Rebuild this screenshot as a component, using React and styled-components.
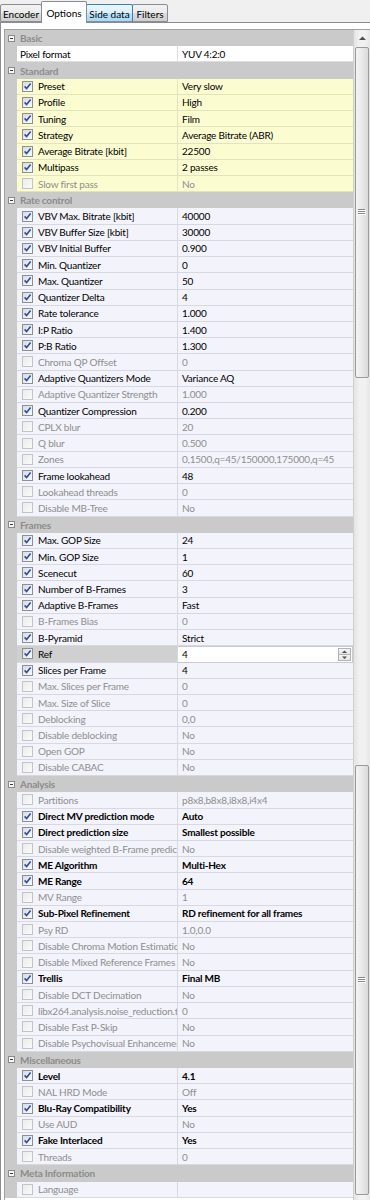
import React from 'react';
import styled, { createGlobalStyle } from 'styled-components';

const ROW_H = 16.22;
const CAT = '#cacaca';

const tones = {
  white: { bg: '#ffffff', line: '#dedede' },
  yellow: { bg: '#fcfcd1', line: '#e3e3c0' },
  lilac: { bg: '#f3f3fb', line: '#d8d8e2' },
};

const tabs = [
  { label: 'Encoder', w: 42 },
  { label: 'Options', w: 46, active: true },
  { label: 'Side data', w: 47, hover: true },
  { label: 'Filters', w: 36 },
];

// state: on = checked, bold = checked + changed, off = unchecked/disabled, plain = no checkbox
const sections = [
  { title: 'Basic', tone: 'white', rows: [['Pixel format', 'YUV 4:2:0', 'plain']] },
  {
    title: 'Standard', tone: 'yellow', rows: [
      ['Preset', 'Very slow', 'on'],
      ['Profile', 'High', 'on'],
      ['Tuning', 'Film', 'on'],
      ['Strategy', 'Average Bitrate (ABR)', 'on'],
      ['Average Bitrate [kbit]', '22500', 'on'],
      ['Multipass', '2 passes', 'on'],
      ['Slow first pass', 'No', 'off'],
    ],
  },
  {
    title: 'Rate control', tone: 'lilac', rows: [
      ['VBV Max. Bitrate [kbit]', '40000', 'on'],
      ['VBV Buffer Size [kbit]', '30000', 'on'],
      ['VBV Initial Buffer', '0.900', 'on'],
      ['Min. Quantizer', '0', 'on'],
      ['Max. Quantizer', '50', 'on'],
      ['Quantizer Delta', '4', 'on'],
      ['Rate tolerance', '1.000', 'on'],
      ['I:P Ratio', '1.400', 'on'],
      ['P:B Ratio', '1.300', 'on'],
      ['Chroma QP Offset', '0', 'off'],
      ['Adaptive Quantizers Mode', 'Variance AQ', 'on'],
      ['Adaptive Quantizer Strength', '1.000', 'off'],
      ['Quantizer Compression', '0.200', 'on'],
      ['CPLX blur', '20', 'off'],
      ['Q blur', '0.500', 'off'],
      ['Zones', '0,1500,q=45/150000,175000,q=45', 'off'],
      ['Frame lookahead', '48', 'on'],
      ['Lookahead threads', '0', 'off'],
      ['Disable MB-Tree', 'No', 'off'],
    ],
  },
  {
    title: 'Frames', tone: 'lilac', rows: [
      ['Max. GOP Size', '24', 'on'],
      ['Min. GOP Size', '1', 'on'],
      ['Scenecut', '60', 'on'],
      ['Number of B-Frames', '3', 'on'],
      ['Adaptive B-Frames', 'Fast', 'on'],
      ['B-Frames Bias', '0', 'off'],
      ['B-Pyramid', 'Strict', 'on'],
      ['Ref', '4', 'edit'],
      ['Slices per Frame', '4', 'on'],
      ['Max. Slices per Frame', '0', 'off'],
      ['Max. Size of Slice', '0', 'off'],
      ['Deblocking', '0,0', 'off'],
      ['Disable deblocking', 'No', 'off'],
      ['Open GOP', 'No', 'off'],
      ['Disable CABAC', 'No', 'off'],
    ],
  },
  {
    title: 'Analysis', tone: 'lilac', rows: [
      ['Partitions', 'p8x8,b8x8,i8x8,i4x4', 'off'],
      ['Direct MV prediction mode', 'Auto', 'bold'],
      ['Direct prediction size', 'Smallest possible', 'bold'],
      ['Disable weighted B-Frame prediction', 'No', 'off'],
      ['ME Algorithm', 'Multi-Hex', 'bold'],
      ['ME Range', '64', 'bold'],
      ['MV Range', '1', 'off'],
      ['Sub-Pixel Refinement', 'RD refinement for all frames', 'bold'],
      ['Psy RD', '1.0,0.0', 'off'],
      ['Disable Chroma Motion Estimation', 'No', 'off'],
      ['Disable Mixed Reference Frames', 'No', 'off'],
      ['Trellis', 'Final MB', 'bold'],
      ['Disable DCT Decimation', 'No', 'off'],
      ['libx264.analysis.noise_reduction.title', '0', 'off'],
      ['Disable Fast P-Skip', 'No', 'off'],
      ['Disable Psychovisual Enhancements', 'No', 'off'],
    ],
  },
  {
    title: 'Miscellaneous', tone: 'lilac', rows: [
      ['Level', '4.1', 'bold'],
      ['NAL HRD Mode', 'Off', 'off'],
      ['Blu-Ray Compatibility', 'Yes', 'bold'],
      ['Use AUD', 'No', 'off'],
      ['Fake Interlaced', 'Yes', 'bold'],
      ['Threads', '0', 'off'],
    ],
  },
  { title: 'Meta Information', tone: 'lilac', rows: [['Language', '', 'off']] },
];

const GlobalStyle = createGlobalStyle`
  html, body { margin: 0; padding: 0; background: #f0f0f0; }
  body { font-family: Lato, "Liberation Sans", sans-serif; }
`;

const Window = styled.div`
  width: 370px;
  height: 1200px;
  overflow: hidden;
  background: #f0f0f0;
  font-size: 10px;
  letter-spacing: -0.2px;
  color: #000;
`;

const TabStrip = styled.div`
  display: flex;
  align-items: flex-end;
  height: 22px;
  position: relative;
  z-index: 2;
  letter-spacing: 0;
`;

const Tab = styled.div`
  box-sizing: border-box;
  width: ${p => p.$w}px;
  height: ${p => (p.$active ? 22 : 18)}px;
  margin-bottom: ${p => (p.$active ? -1 : 0)}px;
  margin-left: -1px;
  &:first-child { margin-left: 0; }
  display: flex;
  align-items: center;
  justify-content: center;
  padding-top: ${p => (p.$active ? 0 : 2)}px;
  border: 1px solid ${p => (p.$hover ? '#3c7fb1' : '#898c95')};
  border-bottom: ${p => (p.$active ? 'none' : '1px solid #898c95')};
  border-radius: 2px 2px 0 0;
  position: relative;
  z-index: ${p => (p.$active ? 2 : p.$hover ? 1 : 0)};
  background: ${p =>
    p.$active
      ? '#ffffff'
      : p.$hover
        ? 'linear-gradient(#eaf6fd, #d9f0fc 50%, #bee6fd 50%, #a7d9f5)'
        : 'linear-gradient(#f2f2f2, #ebebeb 50%, #dddddd 50%, #cfcfcf)'};
  white-space: nowrap;
`;

const Page = styled.div`
  box-sizing: border-box;
  height: 1178px;
  border-top: 1px solid #898c95;
  border-left: 1px solid #898c95;
  background: #ffffff;
  padding: 6px 0 0 3px;
`;

const Grid = styled.div`
  display: flex;
  border-top: 1px solid #a0a0a0;
  border-left: 1px solid #a0a0a0;
  height: 1180px;
`;

const Rows = styled.div`
  width: 348px;
  flex: none;
  display: flex;
  flex-direction: column;
`;

const CatRow = styled.div`
  display: flex;
  align-items: center;
  flex: none;
  height: ${ROW_H}px;
  background: ${CAT};
  color: #8c8c8c;
  font-weight: 700;
  white-space: nowrap;
`;

const Expander = styled.span`
  box-sizing: border-box;
  width: 7px;
  height: 7px;
  margin: 0 5px 0 3px;
  border: 1px solid #8a8a8a;
  background: #f7f7f7;
  display: flex;
  align-items: center;
  justify-content: center;
  &::after {
    content: '';
    width: 3px;
    height: 1px;
    background: #3a3a3a;
  }
`;

const Row = styled.div`
  display: flex;
  flex: none;
  height: ${ROW_H}px;
`;

const Margin = styled.div`
  width: 12px;
  flex: none;
  background: ${CAT};
`;

const NameCell = styled.div`
  box-sizing: border-box;
  width: 161px;
  flex: none;
  display: flex;
  align-items: center;
  gap: 5px;
  padding-left: ${p => (p.$plain ? 3 : 5)}px;
  overflow: hidden;
  white-space: nowrap;
  background: ${p => (p.$selected ? '#d0d0d0' : p.$bg)};
  border-right: 1px solid ${p => p.$line};
  border-bottom: 1px solid ${p => p.$line};
  color: ${p => (p.$dim ? '#8e8e8e' : '#000')};
  font-weight: ${p => (p.$bold ? 700 : 400)};
`;

const Label = styled.span`
  flex: 1;
  min-width: 0;
  overflow: hidden;
`;

const ValueCell = styled.div`
  box-sizing: border-box;
  flex: 1;
  min-width: 0;
  display: flex;
  align-items: center;
  padding-left: 4px;
  overflow: hidden;
  white-space: nowrap;
  background: ${p => p.$bg};
  border-bottom: 1px solid ${p => p.$line};
  color: ${p => (p.$dim ? '#8e8e8e' : '#000')};
  font-weight: ${p => (p.$bold ? 700 : 400)};
`;

const Editor = styled.div`
  box-sizing: border-box;
  flex: 1;
  min-width: 0;
  display: flex;
  align-items: center;
  padding-left: 4px;
  background: #ffffff;
  border: 1px solid #c9c9d3;
  border-left: none;
`;

const Spin = styled.div`
  margin-left: auto;
  margin-right: 1px;
  width: 13px;
  height: 13px;
  display: flex;
  flex-direction: column;
`;

const SpinButton = styled.div`
  box-sizing: border-box;
  flex: 1;
  display: flex;
  align-items: center;
  justify-content: center;
  border: 1px solid #b4b4b4;
  border-top: ${p => (p.$down ? 'none' : '1px solid #b4b4b4')};
  background: linear-gradient(#f6f6f6, #e4e4e4);
`;

const Box = styled.span`
  box-sizing: border-box;
  width: 11px;
  height: 11px;
  flex: none;
  display: flex;
  align-items: center;
  justify-content: center;
  border: 1px solid ${p => (p.$on ? '#8e8f8f' : '#c4c4c4')};
  background: ${p =>
    p.$on ? 'linear-gradient(135deg, #d6dbe3, #fbfbfb)' : 'linear-gradient(135deg, #ececec, #fafafa)'};
`;

const ScrollBar = styled.div`
  width: 16px;
  flex: none;
  display: flex;
  flex-direction: column;
  border-left: 1px solid #cfcfcf;
  background: linear-gradient(90deg, #e4e4e4, #f1f1f1 35%, #f1f1f1 70%, #e6e6e6);
`;

const ArrowButton = styled.div`
  height: 16px;
  flex: none;
  display: flex;
  align-items: center;
  justify-content: center;
`;

const Thumb = styled.div`
  box-sizing: border-box;
  height: ${p => p.$h}px;
  flex: none;
  margin: ${p => p.$top || 0}px 1px 0 1px;
  border: 1px solid #999999;
  border-radius: 2px;
  background: linear-gradient(90deg, #f4f4f4, #e9e9e9 50%, #dadada);
  display: flex;
  align-items: center;
  justify-content: center;
`;

const Track = styled.div`
  height: ${p => p.$h}px;
  flex: none;
`;

function CheckBox({ on }) {
  return (
    <Box $on={on}>
      {on && (
        <svg width="9" height="9" viewBox="0 0 9 9">
          <path d="M1.6 4.4 L3.6 6.6 L7.6 1.6" fill="none" stroke="#2f4f9e" strokeWidth="1.6" />
        </svg>
      )}
    </Box>
  );
}

function Grip() {
  return (
    <svg width="8" height="7" viewBox="0 0 8 7">
      {[0, 2, 4].map(y => (
        <g key={y}>
          <rect x="0" y={y} width="7" height="1" fill="#8a8a8a" />
          <rect x="1" y={y + 1} width="7" height="1" fill="#ffffff" />
        </g>
      ))}
    </svg>
  );
}

function Arrow({ down, size = 7 }) {
  return (
    <svg width={size} height={size / 2 + 1} viewBox="0 0 7 4.5">
      <path d={down ? 'M0 0.5 L7 0.5 L3.5 4 Z' : 'M0 4 L7 4 L3.5 0.5 Z'} fill="#4d4d4d" />
    </svg>
  );
}

function PropRow({ row, tone }) {
  const [label, value, state] = row;
  const { bg, line } = tones[tone];
  const dim = state === 'off';
  const bold = state === 'bold';
  const editing = state === 'edit';
  return (
    <Row>
      <Margin />
      <NameCell $bg={bg} $line={line} $dim={dim} $bold={bold} $plain={state === 'plain'} $selected={editing}>
        {state !== 'plain' && <CheckBox on={!dim} />}
        <Label>{label}</Label>
      </NameCell>
      {editing ? (
        <Editor>
          <span>{value}</span>
          <Spin>
            <SpinButton><Arrow size={5} /></SpinButton>
            <SpinButton $down><Arrow size={5} down /></SpinButton>
          </Spin>
        </Editor>
      ) : (
        <ValueCell $bg={bg} $line={line} $dim={dim} $bold={bold}>
          {value}
        </ValueCell>
      )}
    </Row>
  );
}

export default function App() {
  return (
    <>
      <GlobalStyle />
      <Window>
        <TabStrip>
          {tabs.map(t => (
            <Tab key={t.label} $w={t.w} $active={t.active} $hover={t.hover}>
              {t.label}
            </Tab>
          ))}
        </TabStrip>
        <Page>
          <Grid>
            <Rows>
              {sections.map(s => (
                <React.Fragment key={s.title}>
                  <CatRow>
                    <Expander />
                    {s.title}
                  </CatRow>
                  {s.rows.map(r => (
                    <PropRow key={r[0]} row={r} tone={s.tone} />
                  ))}
                </React.Fragment>
              ))}
            </Rows>
            <ScrollBar>
              <ArrowButton><Arrow /></ArrowButton>
              <Thumb $h={331} $top={1}><Grip /></Thumb>
              <Track $h={387} />
              <Thumb $h={430}><Grip /></Thumb>
            </ScrollBar>
          </Grid>
        </Page>
      </Window>
    </>
  );
}
